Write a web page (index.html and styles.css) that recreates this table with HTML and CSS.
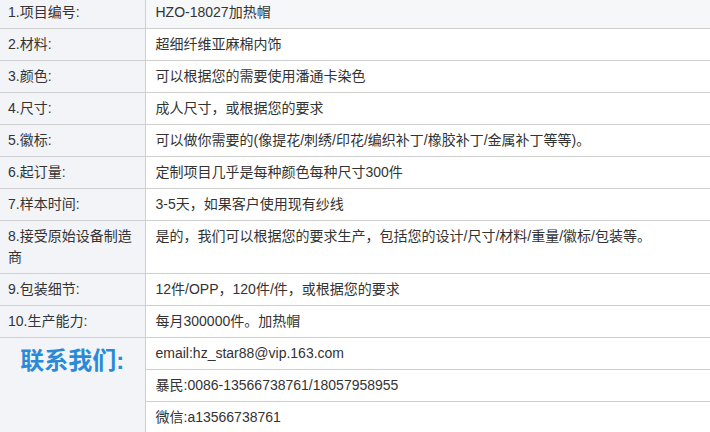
FILE: index.html
```html
<!DOCTYPE html>
<html lang="zh-CN">
<head>
<meta charset="utf-8">
<title>产品参数</title>
<link rel="stylesheet" href="styles.css">
</head>
<body>
<table class="spec">
  <colgroup>
    <col class="col-label">
    <col class="col-value">
  </colgroup>
  <tbody>
    <tr class="first">
      <td class="label">1.项目编号:</td>
      <td class="value">HZO-18027加热帽</td>
    </tr>
    <tr>
      <td class="label">2.材料:</td>
      <td class="value">超细纤维亚麻棉内饰</td>
    </tr>
    <tr>
      <td class="label">3.颜色:</td>
      <td class="value">可以根据您的需要使用潘通卡染色</td>
    </tr>
    <tr>
      <td class="label">4.尺寸:</td>
      <td class="value">成人尺寸，或根据您的要求</td>
    </tr>
    <tr>
      <td class="label">5.徽标:</td>
      <td class="value">可以做你需要的(像提花/刺绣/印花/编织补丁/橡胶补丁/金属补丁等等)。</td>
    </tr>
    <tr>
      <td class="label">6.起订量:</td>
      <td class="value">定制项目几乎是每种颜色每种尺寸300件</td>
    </tr>
    <tr>
      <td class="label">7.样本时间:</td>
      <td class="value">3-5天，如果客户使用现有纱线</td>
    </tr>
    <tr>
      <td class="label">8.接受原始设备制造商</td>
      <td class="value">是的，我们可以根据您的要求生产，包括您的设计/尺寸/材料/重量/徽标/包装等。</td>
    </tr>
    <tr>
      <td class="label">9.包装细节:</td>
      <td class="value">12件/OPP，120件/件，或根据您的要求</td>
    </tr>
    <tr>
      <td class="label">10.生产能力:</td>
      <td class="value">每月300000件。加热帽</td>
    </tr>
    <tr>
      <td class="label contact" rowspan="3"><span class="contact-title">联系我们:</span></td>
      <td class="value">email:hz_star88@vip.163.com</td>
    </tr>
    <tr>
      <td class="value">暴民:0086-13566738761/18057958955</td>
    </tr>
    <tr>
      <td class="value">微信:a13566738761</td>
    </tr>
  </tbody>
</table>
</body>
</html>
```

FILE: styles.css
```css
html, body {
  margin: 0;
  padding: 0;
  background: #ffffff;
}

body {
  font-family: "Liberation Sans", Arial, "Noto Sans CJK SC", sans-serif;
  font-size: 14px;
  color: #333333;
}

.spec {
  width: 100%;
  border-collapse: collapse;
  table-layout: fixed;
  margin-top: -4px;
}

.col-label {
  width: 145px;
}

.spec td {
  border: 1px solid #cfcfcf;
  padding: 5px 8px 5px 8px;
  line-height: 21px;
  vertical-align: top;
  text-align: left;
}

.spec td.label {
  background: #f3f4f8;
  border-left: none;
}

.spec td.value {
  padding-left: 10px;
  border-right: none;
}

.spec tr.first td.value {
  background: #f6f7f9;
}

.spec td.contact {
  text-align: center;
  padding-top: 5px;
}

.contact-title {
  display: inline-block;
  font-size: 24px;
  font-weight: bold;
  line-height: 36px;
  color: #2a8ad8;
}
```
